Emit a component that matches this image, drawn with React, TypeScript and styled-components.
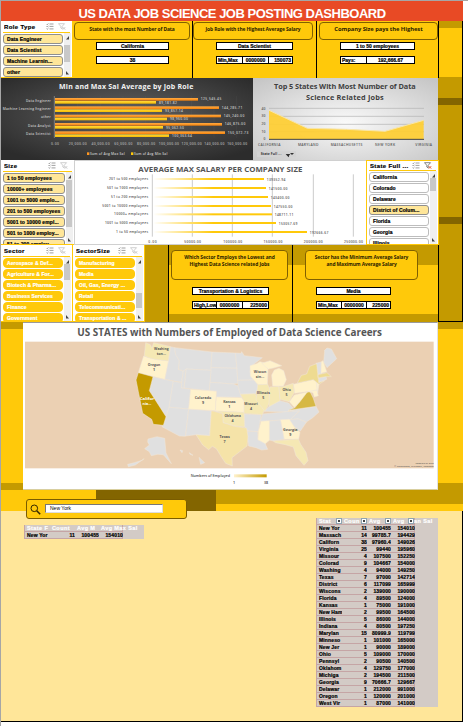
import React from 'react';
import styled, { createGlobalStyle, css } from 'styled-components';

const YELLOW = '#ffc90a';
const GOLD = '#c49a00';
const BROWN = '#836500';
const CREAM = '#ffe699';
const INK = '#000';

const Global = createGlobalStyle`
  *, *::before, *::after { box-sizing: border-box; }
  body { margin: 0; background: #fff; font-family: "Liberation Sans", Arial, sans-serif; }
`;

const Page = styled.div`
  width: 468px;
  height: 726px;
  overflow: hidden;
  border-top: 1px solid #a6a6a6;
  border-left: 1px solid #a6a6a6;
  background: #fff;
`;
const Sheet = styled.main`
  width: 462px;
  height: 721px;
  background: ${YELLOW};
  display: flex;
  flex-direction: column;
`;
const TitleBar = styled.h1`
  margin: 0;
  height: 20px;
  flex: none;
  background: #e84a25;
  color: #fff;
  font: bold 13px/25px "Liberation Sans", Arial, sans-serif;
  letter-spacing: -0.5px;
  text-align: center;
  white-space: nowrap;
  overflow: hidden;
`;
const Band = styled.section<{ $h: number }>`
  display: flex;
  flex: none;
  height: ${p => p.$h}px;
`;
const Strip = styled.div<{ $fill: string; $left?: boolean; $bottom?: boolean; $right?: boolean; $w?: number }>`
  width: ${p => p.$w ?? 24}px;
  flex: none;
  background: ${p => p.$fill};
  border-left: ${p => (p.$left ? '1px solid #000' : '0')};
  border-right: ${p => (p.$right === false ? '0' : '1px solid #000')};
  border-bottom: ${p => (p.$bottom ? '1px solid #000' : '0')};
`;

/* Slicers */
const SlicerBox = styled.div<{ $w: number; $framed?: boolean; $side?: number }>`
  width: ${p => p.$w}px;
  flex: none;
  background: #fff;
  display: flex;
  flex-direction: column;
  overflow: hidden;
  padding-left: 2px;
  border-right: ${p => p.$side ?? 1}px solid ${YELLOW};
  border-bottom: 1px solid ${YELLOW};
  ${p => p.$framed && css`border-left: 1px solid ${YELLOW}; border-top: 1px solid ${YELLOW};`}
`;
const SlicerHead = styled.div<{ $h: number }>`
  height: ${p => p.$h}px;
  flex: none;
  display: flex;
  align-items: center;
  border-bottom: 1px solid ${YELLOW};
  margin-right: 2px;
  padding-left: 1px;
  font-size: 6px;
  font-weight: bold;
  letter-spacing: 0.35px;
  white-space: nowrap;
  -webkit-text-stroke: 0.2px #000;
  svg { flex: none; margin-right: 4px; }
  span { flex: 1; overflow: hidden; }
`;
const SlicerBody = styled.div`
  display: flex;
  flex: 1;
  min-height: 0;
  gap: 1px;
  overflow: hidden;
`;
const Items = styled.div`
  flex: 1;
  min-width: 0;
  display: flex;
  flex-direction: column;
  gap: 1px;
  padding-top: 1px;
`;
type Tone = 'cream' | 'white' | 'solid';
const Item = styled.div<{ $tone: Tone }>`
  height: 10px;
  flex: none;
  border: 1px solid #8f8f8f;
  border-radius: 3px;
  padding-left: 3px;
  font: bold 5px/8px "Liberation Sans", Arial, sans-serif;
  letter-spacing: 0.1px;
  white-space: nowrap;
  overflow: hidden;
  background: ${CREAM};
  color: ${INK};
  -webkit-text-stroke: 0.2px currentColor;
  ${p => p.$tone === 'white' && css`background: #fff; border-color: #bdbdbd;`}
  ${p => p.$tone === 'solid' && css`background: ${YELLOW}; border-color: ${YELLOW}; color: #fff; border-radius: 4px;`}
`;
const Track = styled.div<{ $top: number; $thumb: number }>`
  width: 7px;
  flex: none;
  margin-right: 1px;
  background: #f0f0f0;
  display: flex;
  flex-direction: column;
  align-items: center;
  justify-content: space-between;
  padding: 3px 0 2px;
  background-image: linear-gradient(#c8c8c8, #c8c8c8);
  background-size: 6px ${p => p.$thumb}px;
  background-position: 0 ${p => p.$top}px;
  background-repeat: no-repeat;
`;

const MultiIcon = () => (
  <svg width="8" height="7" viewBox="0 0 8 7" fill="none" stroke="#777" strokeWidth=".7">
    <path d="M.5 1l.7.7L2.5.4M.5 3.3l.7.7 1.3-1.3M.5 5.6l.7.7L2.5 5M3.5 1h4M3.5 3.4h4M3.5 5.9h4" />
  </svg>
);
const FunnelIcon = ({ active }: { active?: boolean }) => (
  <svg width="8" height="7" viewBox="0 0 8 7" fill="none">
    <path d="M.5.7h6L4.2 3.3v2.6L2.8 5V3.3z" stroke={active ? '#666' : '#c4c4c4'} strokeWidth=".8" />
    <path d="M4.8 4.2l2.4 2.4M7.2 4.2L4.8 6.6" stroke={active ? '#e04a25' : '#c4c4c4'} strokeWidth=".9" />
  </svg>
);
const Arrow = ({ down }: { down?: boolean }) => (
  <svg width="5" height="4" viewBox="0 0 5 4">
    <path d={down ? 'M1 0v3.5h3z' : 'M4 0v3.5H1z'} fill="#444" />
  </svg>
);

interface SlicerProps {
  title: string; items: string[]; width: number; head?: number; tone: Tone;
  top: number; thumb: number; selected?: string; framed?: boolean; side?: number;
}
const Slicer = ({ title, items, width, head = 11, tone, top, thumb, selected, framed, side }: SlicerProps) => (
  <SlicerBox $w={width} $framed={framed} $side={side}>
    <SlicerHead $h={head}><span>{title}</span><MultiIcon /><FunnelIcon active={!!selected} /></SlicerHead>
    <SlicerBody>
      <Items>{items.map(i => <Item key={i} $tone={i === selected ? 'cream' : tone}>{i}</Item>)}</Items>
      <Track $top={top} $thumb={thumb}><Arrow /><Arrow down /></Track>
    </SlicerBody>
  </SlicerBox>
);

/* Key figure cards */
const Card = styled.div<{ $w: number; $split?: boolean }>`
  width: ${p => p.$w}px;
  flex: none;
  border-right: 1px solid #000;
  padding-top: 1px;
  background: ${YELLOW};
  ${p => p.$split && css`
    padding-top: 5px;
    background: linear-gradient(${GOLD} 20px, ${YELLOW} 20px 69px, ${GOLD} 69px);
  `}
`;
const Caption = styled.div<{ $x: number; $w: number; $h: number; $size: number; $ls: number }>`
  margin-left: ${p => p.$x}px;
  width: ${p => p.$w}px;
  height: ${p => p.$h}px;
  border: 1px solid #806000;
  border-radius: 4px;
  background: ${YELLOW};
  padding-top: 3px;
  text-align: center;
  font: bold ${p => p.$size}px/7px "Open Sans", sans-serif;
  letter-spacing: ${p => p.$ls}px;
  color: #2b2100;
  white-space: pre-line;
`;
const Values = styled.div<{ $x: number; $cols: string; $mt: number }>`
  display: grid;
  grid-template-columns: ${p => p.$cols};
  width: max-content;
  height: 8px;
  margin: ${p => p.$mt}px 0 0 ${p => p.$x}px;
  border: 1px solid #000;
  background: #000;
  gap: 1px;
`;
const Cell = styled.div<{ $align?: string }>`
  background: #fff;
  overflow: hidden;
  padding: 0 1px;
  text-align: ${p => p.$align ?? 'center'};
  white-space: nowrap;
  font: bold 5px/6px "Liberation Sans", Arial, sans-serif;
  -webkit-text-stroke: 0.2px #000;
`;

/* Charts */
const Plot = styled.svg`
  display: block;
  flex: none;
  text { font-family: "Open Sans", sans-serif; }
`;

const roles = [
  { n: 'Data Engineer', y: 66, a: 594, b: 468, la: '125,545.45', lb: '89,181.82', x: 78 },
  { n: 'Machine Learning Engineer', y: 91, a: 657, b: 486, la: '144,285.71', lb: '93,857.14', x: 8 },
  { n: 'other', y: 116, a: 663, b: 501, la: '145,240.00', lb: '98,960.00', x: 123 },
  { n: 'Data Analyst', y: 141, a: 666, b: 489, la: '146,875.00', lb: '95,062.50', x: 84 },
  { n: 'Data Scientist', y: 166, a: 675, b: 507, la: '150,072.73', lb: '100,363.64', x: 78 },
];
const RoleChart = () => (
  <Plot width="252" height="82" viewBox="3 6 756 246">
    <defs>
      <radialGradient id="dark" cx="50%" cy="45%" r="65%">
        <stop offset="0" stopColor="#626262" /><stop offset="1" stopColor="#2c2c2c" />
      </radialGradient>
      <linearGradient id="or" x2="0" y2="1"><stop stopColor="#ffab43" /><stop offset="1" stopColor="#f5820b" /></linearGradient>
      <linearGradient id="ye" x2="0" y2="1"><stop stopColor="#ffd83e" /><stop offset="1" stopColor="#f7bd00" /></linearGradient>
    </defs>
    <rect x="3" y="6" width="756" height="246" fill="url(#dark)" />
    {[233, 301, 369, 437, 506, 574, 642, 710].map(x => <path key={x} d={`M${x} 60V186`} stroke="#777" opacity=".35" />)}
    <path d="M163 60V186" stroke="#999" strokeWidth="2" />
    <text x="177" y="38" fontSize="21" fontWeight="bold" fill="#f2f2f2" textLength="403">Min and Max Sal Average by Job Role</text>
    {roles.map(r => (
      <g key={r.n} fontSize="10" fill="#c8c8c8" fontWeight="600">
        <rect x="165" y={r.y} width={r.a - 165} height="8" fill="url(#or)" />
        <rect x="165" y={r.y + 9} width={r.b - 165} height="8" fill="url(#ye)" />
        <text x={r.x} y={r.y + 11} textLength={152 - r.x}>{r.n}</text>
        <text x={r.a + 8} y={r.y + 7} textLength="62">{r.la}</text>
        <text x={r.b + 9} y={r.y + 17} textLength={r.lb.length * 6}>{r.lb}</text>
      </g>
    ))}
    {['0.00', '20,000.00', '40,000.00', '60,000.00', '80,000.00', '100,000.00', '120,000.00', '140,000.00', '160,000.00'].map((t, i) => (
      <text key={t} x={165 + i * 68.3} y="206" fontSize="10" fontWeight="600" fill="#b0b0b0" textAnchor="middle" textLength={t.length * 6}>{t}</text>
    ))}
    <rect x="261" y="229" width="7" height="8" fill="#ff9820" />
    <rect x="393" y="229" width="7" height="8" fill="#ffc90a" />
    <text x="270" y="237" fontSize="10" fontWeight="600" fill="#ccc" textLength="104">Sum of Avg Max Sal</text>
    <text x="402" y="237" fontSize="10" fontWeight="600" fill="#ccc" textLength="100">Sum of Avg Min Sal</text>
  </Plot>
);

const StateChart = () => (
  <Plot width="185" height="82" viewBox="9 6 555 246">
    <defs>
      <radialGradient id="light" cx="50%" cy="55%" r="70%">
        <stop offset="0" stopColor="#fafafa" /><stop offset="1" stopColor="#c6c6c6" />
      </radialGradient>
    </defs>
    <rect x="7" y="4" width="560" height="250" fill="url(#light)" />
    <g fontSize="22" fontWeight="bold" fill="#404040">
      <text x="72" y="38" textLength="425">Top 5 States With Most Number of Data</text>
      <text x="168" y="71" textLength="233">Science Related Jobs</text>
    </g>
    {[97, 121, 145, 167].map(y => <path key={y} d={`M57 ${y}H522`} stroke="#b0b0b0" strokeWidth="2" />)}
    <path d="M57 103L172 157L290 160L405 166L521 133V190H57z" fill="#ffcf33" fillOpacity=".93" />
    <path d="M57 103L172 157L290 160L405 166L521 133" fill="none" stroke="#f8e6a8" strokeWidth="3" />
    <path d="M57 190H522" stroke="#444" strokeWidth="3" />
    <g fontSize="10" fill="#555" fontWeight="600">
      {['40', '30', '20', '10', '0'].map((t, i) => <text key={t} x="46" y={101 + i * 23} textAnchor="end">{t}</text>)}
      <text x="24" y="209" textLength="67">CALIFORNIA</text>
      <text x="144" y="209" textLength="61">MARYLAND</text>
      <text x="242" y="209" textLength="95">MASSACHUSETTS</text>
      <text x="375" y="209" textLength="60">NEW YORK</text>
      <text x="496" y="209" textLength="50">VIRGINIA</text>
    </g>
    <rect x="21" y="226" width="117" height="17" fill="#d3d3d3" />
    <text x="32" y="238" fontSize="10" fontWeight="bold" fill="#333" textLength="62">State Full ...</text>
    <path d="M107 234h14l-4 5v5l-5-4z M120 231h12l-6 6z" fill="#333" />
  </Plot>
);

const sizes = [
  { n: '201 to 500 employees', x: 327, y: 57, e: 792, v: '139352.94' },
  { n: '501 to 1000 employees', x: 321, y: 84, e: 798, v: '141500.00' },
  { n: '51 to 200 employees', x: 333, y: 111, e: 804, v: '143400.00' },
  { n: '5001 to 10000 employees', x: 307, y: 138, e: 813, v: '147550.00' },
  { n: '10000+ employees', x: 342, y: 163, e: 816, v: '148711.11' },
  { n: '1001 to 5000 employees', x: 315, y: 189, e: 828, v: '153057.69' },
  { n: '1 to 50 employees', x: 348, y: 216, e: 921, v: '192666.67' },
];
const SizeChart = () => (
  <Plot width="292" height="85" viewBox="222 0 876 255">
    <defs>
      <linearGradient id="fade" gradientUnits="userSpaceOnUse" x1="460" x2="640">
        <stop stopColor="#fff" /><stop offset="1" stopColor="#ffc90a" />
      </linearGradient>
    </defs>
    <rect x="222" y="0" width="876" height="255" fill="#fff" />
    <path d="M223.500 0V255M222 1.500H1098M222 253.500H1098" stroke="#d0d0d0" strokeWidth="3" />
    {[457, 577, 697, 817, 940, 1060].map(x => <path key={x} d={`M${x} 43V230`} stroke="#c0c0c0" strokeWidth="2.500" />)}
    <text x="415" y="36" fontSize="23" fontWeight="bold" fill="#555" textLength="492" lengthAdjust="spacingAndGlyphs">AVERAGE MAX SALARY PER COMPANY SIZE</text>
    {sizes.map(s => (
      <g key={s.n} fontSize="10" fill="#555" fontWeight="600">
        <rect x="460" y={s.y - 3} width={s.e - 460} height="6" fill="url(#fade)" />
        <text x={s.x} y={s.y + 3} textLength={444 - s.x}>{s.n}</text>
        <text x={s.e + 8} y={s.y + 5} textLength="56">{s.v}</text>
      </g>
    ))}
    {['0.00', '50000.00', '100000.00', '150000.00', '200000.00', '250000.00'].map((t, i) => (
      <text key={t} x={457 + i * 120.600} y="248" fontSize="10" fontWeight="600" fill="#555" textAnchor="middle" textLength={t.length * 6.300}>{t}</text>
    ))}
  </Plot>
);

/* Map */
const MapPanel = styled.div`
  width: 415px;
  flex: none;
  background: #fff;
  border-top: 1px solid #9a9a9a;
  border-bottom: 1px solid #d9cf9f;
  border-right: 1px solid #e2e2e2;
  display: flex;
  flex-direction: column;
  align-items: flex-start;
  padding-left: 1px;
`;
const L = '#fff2cc';
const M = '#f5e8b4';
const G = '#e0e0e0';
const states: [string, string][] = [
  [G, 'M211 80L224 83L226 100L238 122L235 148L250 154L245 187L194 178L205 122Z'],
  [G, 'M224 83L336 96L333 151L258 147L252 154L236 148L238 122L227 104Z'],
  [G, 'M336 96L406 99L411 145L333 143Z'],
  [G, 'M333 143L411 145L414 190L400 192L330 187Z'],
  [G, 'M258 147L333 151L328 212L252 204Z'],
  [G, 'M250 154L258 147L252 204L244 204L245 187Z'],
  [G, 'M159 170L220 184L207 268L198 290L148 212Z'],
  [G, 'M220 184L245 188L244 204L272 208L266 267L207 262Z'],
  [G, 'M207 262L266 267L256 349L238 348L186 320L198 290Z'],
  [G, 'M266 267L334 272L329 347L288 344L257 348Z'],
  [G, 'M330 187L400 192L414 197L425 232L349 231L349 214L328 212Z'],
  [G, 'M406 99L424 100L425 95L433 107L487 113L453 139L450 155L460 180L413 181L411 145Z'],
  [G, 'M413 181L465 180L476 201L467 221L421 223L414 197Z'],
  [G, 'M432 282L484 284L475 335L440 332L434 320Z'],
  [G, 'M440 334L473 335L474 360L493 365L503 388L485 390L468 383L446 378Z'],
  [G, 'M493 274L511 255L540 242L566 249L580 265L560 276Z'],
  [G, 'M488 282L560 275L600 271L572 299L480 304Z'],
  [G, 'M508 303L542 300L553 358L520 363L508 360Z'],
  [G, 'M565 272L648 259L657 276L637 294L619 306L595 297L570 299L599 273Z'],
  [G, 'M565 299L595 297L619 307L601 333L585 322Z'],
  [G, 'M648 130L664 126L665 160L654 164Z'],
  [G, 'M671 127L674 91L681 84L694 87L710 116L681 143Z'],
  [G, 'M656 173L678 169L680 178L657 188Z'],
  [L, 'M131 108L145 113L165 118L205 123L194 178L115 158Z'],
  [M, 'M137 68L151 74L156 84L161 68L211 80L205 123L165 118L145 113L133 107Z'],
  ['#c49a00', 'M115 158L159 170L148 212L198 290L190 316L160 313L155 298L128 280L122 250L115 215L108 180Z'],
  [L, 'M272 208L349 214L346 272L266 267Z'],
  [L, 'M349 231L425 233L432 243L432 277L346 273Z'],
  [M, 'M368 280L346 273L432 277L434 321L404 318L369 308Z'],
  ['#f5e3a8', 'M334 272L368 281L369 308L404 319L440 324L444 350L441 378L413 400L396 413L397 438L377 430L363 409L349 386L337 379L326 389L308 375L288 344L329 347Z'],
  [M, 'M421 223L466 221L476 245L493 270L487 284L432 280L432 243Z'],
  [L, 'M450 137L470 131L480 125L500 131L504 148L502 194L474 194L451 168Z'],
  [M, 'M473 194L503 193L509 207L508 249L495 274L468 240Z'],
  [M, 'M509 201L537 199L540 242L507 260Z'],
  [L, 'M518 198L515 165L523 150L537 145L551 152L559 179L550 198ZM485 130L510 122L545 137L520 144L505 147Z'],
  [M, 'M537 200L553 199L580 190L583 217L567 245L540 238Z'],
  [L, 'M483 304L508 302L508 361L496 371L474 359L475 335Z'],
  [L, 'M542 299L568 298L583 321L600 337L596 357L553 358Z'],
  [M, 'M520 363L595 357L602 373L618 397L624 422L612 436L588 407L580 381L556 374L526 368Z'],
  ['#d6b844', 'M565 271L585 263L599 244L612 218L630 215L640 235L648 259Z'],
  [L, 'M568 245L583 225L622 216L609 233L599 246L583 262Z'],
  [L, 'M581 193L638 179L650 185L652 211L584 220ZM626 215L650 209L655 227L643 231L639 218ZM648 184L657 193L653 219Z'],
  ['#eedb91', 'M592 189L604 166L620 162L629 139L650 131L656 188L674 182L657 193L640 179Z'],
  ['#eedb91', 'M654 164L681 158L694 170L676 170L655 174Z'],
  [L, 'M664 125L669 122L680 155L663 160Z'],
  [G, 'M144 357L171 350L194 355L198 399L214 431L190 404L173 403L154 407L148 395L134 386L148 375L143 366Z'],
  [G, 'M240 390L248 392L246 398ZM268 398L279 406L270 403ZM297 412L314 428L302 433Z'],
  [G, 'M83 433L103 428L127 421L132 416L106 435L85 440Z'],
];
const mapLabels: [string, string, number, number, string?][] = [
  ['Washing', 'ton...', 184, 90], ['Oregon', '1', 162, 137], ['Califor', 'nia...', 141, 240, '#fff'],
  ['Colorado', '9', 309, 236], ['Kansas', '1', 388, 248], ['Missouri', '4', 453, 255],
  ['Oklahoma', '4', 398, 290], ['Texas', '7', 374, 354], ['Wiscon', 'sin...', 480, 159],
  ['Illinois', '5', 490, 221], ['Ohio', '5', 560, 212], ['Georgia', '9', 571, 332],
];
const StateMap = () => (
  <Plot width="410" height="165" viewBox="-228 9 1230 495">
    <defs><linearGradient id="scale"><stop stopColor="#fff2cc" /><stop offset="1" stopColor="#c49a00" /></linearGradient></defs>
    <text x="-68" y="47" fontSize="32" fontWeight="bold" fill="#555" textLength="914" lengthAdjust="spacingAndGlyphs">US STATES with Numbers of Employed of Data Science Careers</text>
    <rect x="-225" y="65" width="1226" height="380" fill="#ebd0b3" />
    {states.map(([fill, d]) => <path key={d} d={d} fill={fill} stroke="#f1e6d8" strokeWidth="1.500" strokeLinejoin="round" />)}
    {mapLabels.map(([a, b, x, y, c]) => (
      <g key={a} fontSize="11" fontWeight="bold" textAnchor="middle" fill={c ?? '#555'}>
        <text x={x} y={y} textLength={a.length * (a === 'Illinois' || a === 'Missouri' ? 5 : 6.200)} lengthAdjust="spacingAndGlyphs">{a}</text>
        <text x={x} y={y + 15}>{b}</text>
      </g>
    ))}
    <g fontSize="7" fill="#444" textAnchor="end">
      <text x="1001" y="432">Powered by Bing</text>
      <text x="1001" y="441" textLength="118">© GeoNames, Microsoft, TomTom</text>
    </g>
    <g fontSize="11" fontWeight="600" fill="#444">
      <text x="272" y="471" textLength="118">Numbers of Employed</text>
      <text x="402" y="492" textAnchor="middle">1</text>
      <text x="498" y="492" textAnchor="middle">38</text>
    </g>
    <rect x="402" y="463" width="98" height="9" fill="url(#scale)" />
  </Plot>
);

/* Search area and tables */
const SearchBand = styled(Band)`
  background: linear-gradient(90deg, ${YELLOW} 95px, ${BROWN} 95px 215px, transparent 215px),
    linear-gradient(${GOLD} 14px, ${YELLOW} 14px);
`;
const SearchBox = styled.div`
  margin: 9px 0 -8px 25px;
  width: 161px;
  height: 20px;
  border: 1px solid #7a5c00;
  border-radius: 3px;
  background: ${YELLOW};
  display: flex;
  align-items: center;
  padding-left: 3px;
  gap: 4px;
  z-index: 1;
`;
const SearchField = styled.div`
  width: 118px;
  height: 9px;
  margin-top: -1px;
  background: #fff;
  border: 1px solid #ddd;
  border-top-color: #777;
  border-left-color: #777;
  padding-left: 4px;
  font: 5px/7px "Liberation Sans", Arial, sans-serif;
`;
const Lower = styled.section`
  flex: 1;
  min-height: 0;
  display: flex;
  align-items: flex-start;
  background: ${CREAM};
  border-right: 1px solid #000;
  border-bottom: 1px solid #000;
`;
const Table = styled.div<{ $ml: number; $mt: number; $w: number }>`
  margin: ${p => p.$mt}px 0 0 ${p => p.$ml}px;
  width: ${p => p.$w}px;
  flex: none;
  background: #d3cbc6;
  font: bold 5px/7px "Liberation Sans", Arial, sans-serif;
  letter-spacing: 0.15px;
  -webkit-text-stroke: 0.2px currentColor;
`;
const Row = styled.div<{ $head?: boolean }>`
  display: grid;
  grid-template-columns: 25px 25px 24px 24px;
  width: 99px;
  height: 7px;
  line-height: 7px;
  border: 1px solid #c5a5a5;
  border-width: 0 1px 1px;
  > * { text-align: right; white-space: nowrap; overflow: hidden; line-height: 7px; height: 7px; }
  > :first-child { text-align: left; padding-left: 2px; }
  ${p => p.$head && css`color: #fff; font-size: 5.500px; letter-spacing: 0.400px; > * { text-align: left; padding-left: 2px; } > :last-child { overflow: visible; }`}
`;
const HeadCell = styled.span`
  display: flex;
  justify-content: space-between;
`;
const LastHeadCell = styled(HeadCell)`
  justify-content: flex-start;
`;
const Filter = styled.i`
  width: 6px;
  height: 6px;
  flex: none;
  z-index: 1;
  background: radial-gradient(circle, #444 0.800px, #fff 1.200px);
  border: 1px solid #8ea5b3;
`;
const Label = styled.span<{ $w?: number }>`
  flex: none;
  width: ${p => (p.$w ? `${p.$w}px` : 'auto')};
`;
const SelectionMark = styled.div`
  width: 1px;
  height: 15px;
  margin: 42px 0 0 -1px;
  flex: none;
  background: #217346;
`;

const data = `New Yor|11|100455|154010
Massach|14|99785.7|194429
Californ|38|97960.4|149026
Virginia|25|99440|195960
Missour|4|107500|152250
Colorad|9|104667|154000
Washing|4|94000|149250
Texas|7|97000|142714
District|6|117099|165999
Wiscons|2|139000|190000
Florida|4|89500|124000
Kansas|1|75000|191000
New Ham|2|99500|164500
Illinois|5|86000|144000
Indiana|4|80500|197250
Marylan|15|80999.9|119799
Minneso|1|101000|165000
New Jer|1|90000|189000
Ohio|5|109000|170000
Pennsyl|2|90500|140500
Oklahom|4|129750|177000
Michiga|2|194500|211500
Georgia|9|70666.7|129667
Delawar|1|212000|991000
Oregon|1|120000|201000
West Vir|1|87000|141000`.split('\n').map(r => r.split('|'));

const DataRow = ({ cells }: { cells: string[] }) => <Row>{cells.map((c, i) => <span key={i}>{c}</span>)}</Row>;

export default function App() {
  return (
    <>
      <Global />
      <Page>
        <Sheet>
          <TitleBar>US DATA JOB SCIENCE JOB POSTING DASHBOARD</TitleBar>

          <Band $h={57}>
            <Slicer title="Role Type" width={72} head={12} tone="cream" top={12} thumb={17}
              items={['Data Engineer', 'Data Scientist', 'Machine Learnin...', 'other']} />
            <Card $w={120}>
              <Caption $x={1} $w={116} $h={18} $size={4.9} $ls={-0.1}>State with the most Number of Data</Caption>
              <Values $x={23} $cols="71px" $mt={2}><Cell>California</Cell></Values>
              <Values $x={23} $cols="71px" $mt={6}><Cell>38</Cell></Values>
            </Card>
            <Card $w={124}>
              <Caption $x={0} $w={120} $h={18} $size={4.9} $ls={-0.1}>Job Role with the Highest Average Salary</Caption>
              <Values $x={23} $cols="75px" $mt={2}><Cell>Data Scientist</Cell></Values>
              <Values $x={23} $cols="25px 25px 23px" $mt={6}><Cell $align="left">Min,Max</Cell><Cell>0000000</Cell><Cell $align="right">150073</Cell></Values>
            </Card>
            <Card $w={122}>
              <Caption $x={2} $w={119} $h={18} $size={5.8} $ls={-0.05}>Company Size pays the Highest</Caption>
              <Values $x={23} $cols="73px" $mt={2}><Cell>1 to 50 employees</Cell></Values>
              <Values $x={23} $cols="25px 47px" $mt={6}><Cell $align="left">Pays:</Cell><Cell>192,666.67</Cell></Values>
            </Card>
            <Strip $fill={`linear-gradient(${GOLD} 7px, ${YELLOW} 7px 56px, ${GOLD} 56px)`} />
          </Band>

          <Band $h={82}>
            <RoleChart />
            <StateChart />
            <Strip $w={25} $fill={`linear-gradient(${GOLD} 20px, ${BROWN} 20px 27px, ${GOLD} 27px)`} />
          </Band>

          <Band $h={85}>
            <Slicer title="Size" width={73} head={12} tone="cream" top={8} thumb={47} side={0}
              items={['1 to 50 employees', '10000+ employees', '1001 to 5000 emplo...', '201 to 500 employees', '5001 to 10000 empl...', '501 to 1000 employ...', '51 to 200 employ...']} />
            <SizeChart />
            <Slicer title="State Full ..." width={73} head={10} tone="white" top={7} thumb={13} framed selected="District of Colum..."
              items={['California', 'Colorado', 'Delaware', 'District of Colum...', 'Florida', 'Georgia', 'Illinois']} />
            <Strip $fill={`linear-gradient(${GOLD} 57px, ${BROWN} 57px 64px, ${GOLD} 64px)`} />
          </Band>

          <Band $h={77}>
            <Slicer title="Sector" width={72} head={12} tone="solid" top={7} thumb={16}
              items={['Aerospace & Def...', 'Agriculture & For...', 'Biotech & Pharma...', 'Business Services', 'Finance', 'Government']} />
            <Slicer title="SectorSize" width={72} head={12} tone="solid" top={36} thumb={15}
              items={['Manufacturing', 'Media', 'Oil, Gas, Energy ...', 'Retail', 'Telecommunicati...', 'Transportation & ...']} />
            <Strip $w={24} $fill={GOLD} />
            <Card $w={124} $split>
              <Caption $x={2} $w={117} $h={30} $size={4.9} $ls={-0.05}>{'Which Sector Employs the Lowest and\nHighest Data Science related Jobs'}</Caption>
              <Values $x={23} $cols="75px" $mt={7}><Cell>Transportation & Logistics</Cell></Values>
              <Values $x={23} $cols="23px 25px 25px" $mt={6}><Cell $align="left">High,Low</Cell><Cell>0000000</Cell><Cell $align="right">225000</Cell></Values>
            </Card>
            <Card $w={146} $split>
              <Caption $x={12} $w={113} $h={30} $size={4.9} $ls={-0.1}>{'Sector has the Minimum Average Salary\nand Maximum Average Salary'}</Caption>
              <Values $x={23} $cols="73px" $mt={7}><Cell>Media</Cell></Values>
              <Values $x={23} $cols="24px 24px 23px" $mt={6}><Cell $align="left">Min,Max</Cell><Cell>0000000</Cell><Cell $align="right">225000</Cell></Values>
            </Card>
            <Strip $fill={GOLD} $bottom />
          </Band>

          <Band $h={168}>
            <Strip $w={22} $right={false} $fill={`linear-gradient(${GOLD} 7px, ${YELLOW} 7px 161px, ${GOLD} 161px)`} />
            <MapPanel><StateMap /></MapPanel>
            <Strip $w={25} $right={false} $fill={`linear-gradient(${GOLD} 7px, ${YELLOW} 7px 161px, ${GOLD} 161px)`} />
          </Band>

          <SearchBand $h={21}>
            <SearchBox>
              <svg width="11" height="11" viewBox="0 0 11 11" fill="none" stroke="#332700">
                <circle cx="4.300" cy="4.300" r="3.300" strokeWidth="1" /><path d="M6.700 6.700l3.500 3.500" strokeWidth="1.500" />
              </svg>
              <SearchField>New York</SearchField>
            </SearchBox>
          </SearchBand>

          <Lower>
            <SelectionMark />
            <Table $ml={23} $mt={14} $w={120}>
              <Row $head><span>State F</span><span>Count</span><span>Avg M</span><span>Avg Max Sal</span></Row>
              <DataRow cells={data[0]} />
            </Table>
            <Table $ml={172} $mt={7} $w={122}>
              <Row $head>
                {['Stat', 'Coun', 'Avg'].map(h => <HeadCell key={h}>{h}<Filter /></HeadCell>)}
                <LastHeadCell><Label $w={15}>Avg</Label><Filter /><Label>an Sal</Label></LastHeadCell>
              </Row>
              {data.map(r => <DataRow key={r[0]} cells={r} />)}
            </Table>
          </Lower>
        </Sheet>
      </Page>
    </>
  );
}
